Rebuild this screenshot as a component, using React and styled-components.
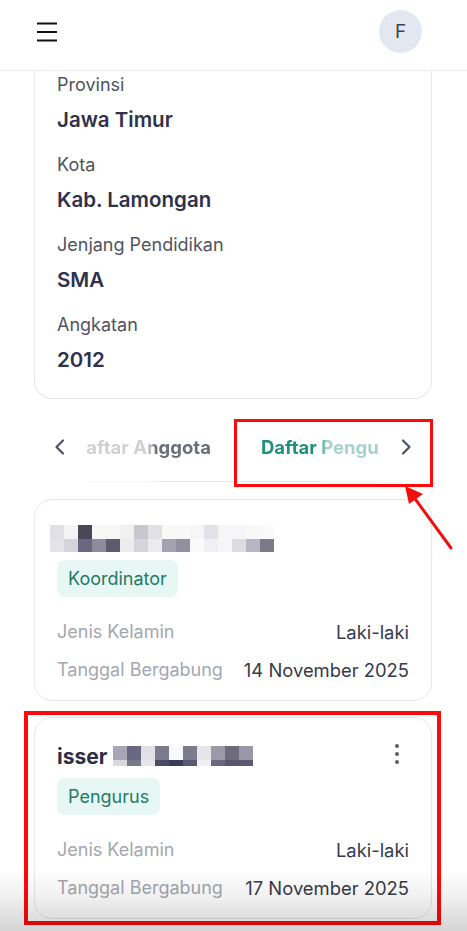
import React from "react";
import styled, { createGlobalStyle } from "styled-components";

const GlobalStyle = createGlobalStyle`
  html, body { margin: 0; padding: 0; background: #ffffff; overflow: hidden; }
  body { font-family: Inter, "Noto Sans", "Liberation Sans", sans-serif; -webkit-font-smoothing: antialiased; }
  * { box-sizing: border-box; }
`;

const Page = styled.div`
  position: relative;
  width: 467px;
  height: 931px;
  overflow: hidden;
  background: #fff;
`;

const Header = styled.header`
  display: flex;
  align-items: center;
  justify-content: space-between;
  padding: 10px 45px 17px 37px;
  border-bottom: 1px solid #ececee;
  background: #fff;
`;

const MenuButton = styled.button`
  display: flex;
  width: 20px;
  height: 20px;
  padding: 0;
  border: 0;
  background: none;
  color: #111;
`;

const Avatar = styled.div`
  width: 43px;
  height: 43px;
  border-radius: 50%;
  background: #e3e8f0;
  color: #3b4252;
  display: flex;
  align-items: center;
  justify-content: center;
  font-size: 19px;
  font-weight: 400;
`;

const Main = styled.main`
  padding: 0 35px 11px 34px;
`;

const InfoCard = styled.section`
  border: 1px solid #e6e7eb;
  border-top: none;
  border-radius: 0 0 18px 18px;
  padding: 2px 22px 24px 22px;
  display: flex;
  flex-direction: column;
  gap: 19px;
`;

const Field = styled.div`
  display: flex;
  flex-direction: column;
  gap: 9px;
`;

const FieldLabel = styled.span`
  font-size: 18px;
  line-height: 24px;
  color: #50535f;
`;

const FieldValue = styled.span`
  font-size: 20.5px;
  line-height: 28px;
  font-weight: 600;
  color: #30314a;
`;

const TabBar = styled.nav`
  display: flex;
  margin: 20px 0 17px;
  height: 63px;
`;

const ArrowButton = styled.button`
  width: 52px;
  padding: 18px 0 0;
  border: 0;
  background: none;
  display: flex;
  justify-content: center;
  align-items: flex-start;
  color: #4b5261;
`;

const TabStrip = styled.div`
  flex: 1;
  overflow: hidden;
  border-bottom: 1px solid #e9ebee;
  -webkit-mask-image: linear-gradient(to right, rgba(0,0,0,0.32) 0%, rgba(0,0,0,0.32) 21%, #000 24%, #000 79%, rgba(0,0,0,0.4) 82%, rgba(0,0,0,0.4) 100%);
  mask-image: linear-gradient(to right, rgba(0,0,0,0.32) 0%, rgba(0,0,0,0.32) 21%, #000 24%, #000 79%, rgba(0,0,0,0.4) 82%, rgba(0,0,0,0.4) 100%);
`;

const TabTrack = styled.div`
  display: flex;
  margin-left: -38px;
  white-space: nowrap;
`;

const Tab = styled.span`
  padding: 16px 25px 0;
  font-size: 18.5px;
  line-height: 24px;
  font-weight: 700;
  color: ${(p) => (p.$active ? "#22917b" : "#6b6f7a")};
`;

const MemberCard = styled.article`
  border: 1px solid #e6e7eb;
  border-radius: 18px;
  padding: 24px 22px 18px 22px;
  & + & { margin-top: 16px; }
`;

const NameRow = styled.div`
  display: flex;
  align-items: flex-start;
  justify-content: space-between;
`;

const Name = styled.div`
  display: flex;
  align-items: center;
  gap: 6px;
  height: 28px;
  margin-left: ${(p) => p.$shift || 0}px;
  font-size: 21px;
  font-weight: 700;
  color: #2e2f45;
`;

const Kebab = styled.button`
  width: 24px;
  height: 24px;
  padding: 0;
  border: 0;
  background: none;
  color: #5b5e6b;
  display: flex;
  align-items: center;
  justify-content: center;
`;

const Badge = styled.span`
  display: inline-flex;
  align-items: center;
  height: 37px;
  margin-top: 8px;
  padding: 0 11px;
  border-radius: 8px;
  background: #e7f7f3;
  color: #1f7a68;
  font-size: 18px;
`;

const Rows = styled.div`
  margin-top: 23px;
  display: flex;
  flex-direction: column;
  gap: 14px;
`;

const Row = styled.div`
  display: flex;
  justify-content: space-between;
  font-size: 18px;
  line-height: 24px;
`;

const RowLabel = styled.span`
  color: #a3a7b0;
`;

const RowValue = styled.span`
  color: #383a4c;
  font-size: 18.4px;
`;

const Highlight = styled.div`
  position: absolute;
  border: ${(p) => p.$w}px solid #ff0a0a;
  pointer-events: none;
`;

const ArrowSvg = styled.svg`
  position: absolute;
  left: 395px;
  top: 478px;
  pointer-events: none;
`;

const BottomShade = styled.div`
  position: absolute;
  left: 0;
  right: 0;
  bottom: 0;
  height: 62px;
  background: linear-gradient(to bottom, rgba(0,0,0,0) 0%, rgba(0,0,0,0.05) 40%, rgba(0,0,0,0.17) 100%);
  pointer-events: none;
`;

const PIX1 = [
  ["e0e0e6", "f4f4f6", "4a4858", "f6f6f6", "f6f6f6", "f0f0f0", "c8c6ce", "e0e0e6", "f8f8f6", "f8f8f8", "f6f6f8", "e2e2e8", "f6f6f8", "f6f6f8", "f8f8f8", "fafafa"],
  ["e4e4e8", "d4d4da", "6a6880", "8e8c9c", "5e5c6c", "ececee", "d4d4da", "ececee", "a4a2b0", "92909e", "fafafa", "f0f0f2", "f6f6f8", "dcdce2", "b8b6c4", "7c7a88"],
];

const PIX2 = [
  ["a8a6b4", "6a6880", "e0e0e6", "7c7a8c", "f8f8fa", "7c7a8c", "e6e6ea", "9c9aa8", "6e6c7c", "9a98a8"],
  ["d8d8de", "7a788a", "e6e6ea", "4c4a66", "3c3a5a", "5a5870", "f0f0f2", "6a6880", "58566c", "5c5a70"],
];

function Pixelated({ rows, heights }) {
  const w = rows[0].length * 14;
  const h = heights.reduce((a, b) => a + b, 0);
  let y = 0;
  return (
    <svg width={w} height={h} viewBox={`0 0 ${w} ${h}`} aria-hidden="true">
      {rows.map((row, ri) => {
        const top = y;
        y += heights[ri];
        return row.map((c, ci) => (
          <rect key={`${ri}-${ci}`} x={ci * 14} y={top} width="14" height={heights[ri]} fill={`#${c}`} />
        ));
      })}
    </svg>
  );
}

const Chevron = ({ dir }) => (
  <svg width="20" height="20" viewBox="0 0 20 20" fill="none" stroke="currentColor" strokeWidth="2.2" strokeLinecap="round" strokeLinejoin="round">
    {dir === "left" ? <path d="M13 3.5 6.5 10 13 16.5" /> : <path d="M7 3.5 13.5 10 7 16.5" />}
  </svg>
);

function Member({ name, pixels, heights, shift, role, date, menu }) {
  return (
    <MemberCard>
      <NameRow>
        <Name $shift={shift}>
          {name && <span>{name}</span>}
          <Pixelated rows={pixels} heights={heights} />
        </Name>
        {menu && (
          <Kebab aria-label="menu">
            <svg width="6" height="22" viewBox="0 0 6 22" fill="currentColor">
              <circle cx="3" cy="3" r="2" />
              <circle cx="3" cy="11" r="2" />
              <circle cx="3" cy="19" r="2" />
            </svg>
          </Kebab>
        )}
      </NameRow>
      <Badge>{role}</Badge>
      <Rows>
        <Row>
          <RowLabel>Jenis Kelamin</RowLabel>
          <RowValue>Laki-laki</RowValue>
        </Row>
        <Row>
          <RowLabel>Tanggal Bergabung</RowLabel>
          <RowValue>{date}</RowValue>
        </Row>
      </Rows>
    </MemberCard>
  );
}

export default function App() {
  const info = [
    ["Provinsi", "Jawa Timur"],
    ["Kota", "Kab. Lamongan"],
    ["Jenjang Pendidikan", "SMA"],
    ["Angkatan", "2012"],
  ];
  return (
    <Page>
      <GlobalStyle />
      <Header>
        <MenuButton aria-label="menu">
          <svg width="20" height="20" viewBox="0 0 20 20" fill="none" stroke="currentColor" strokeWidth="2.2">
            <path d="M0 1.5h20M0 10h20M0 18.5h20" />
          </svg>
        </MenuButton>
        <Avatar>F</Avatar>
      </Header>
      <Main>
        <InfoCard>
          {info.map(([l, v]) => (
            <Field key={l}>
              <FieldLabel>{l}</FieldLabel>
              <FieldValue>{v}</FieldValue>
            </Field>
          ))}
        </InfoCard>
        <TabBar>
          <ArrowButton aria-label="prev"><Chevron dir="left" /></ArrowButton>
          <TabStrip>
            <TabTrack>
              <Tab>Daftar Anggota</Tab>
              <Tab $active>Daftar Pengurus</Tab>
            </TabTrack>
          </TabStrip>
          <ArrowButton aria-label="next"><Chevron dir="right" /></ArrowButton>
        </TabBar>
        <Member pixels={PIX1} heights={[14, 13]} shift={-7} role="Koordinator" date="14 November 2025" />
        <Member name="isser" pixels={PIX2} heights={[14, 6]} role="Pengurus" date="17 November 2025" menu />
      </Main>
      <Highlight $w={3} style={{ left: 234, top: 419, width: 199, height: 68 }} />
      <Highlight $w={4} style={{ left: 24, top: 711, width: 417, height: 214 }} />
      <ArrowSvg width="62" height="76" viewBox="0 0 62 76">
        <line x1="56" y1="70" x2="18" y2="18" stroke="#f01010" strokeWidth="3" strokeLinecap="round" />
        <polygon points="10,8 28,16 14,26" fill="#f01010" />
      </ArrowSvg>
      <BottomShade />
    </Page>
  );
}
